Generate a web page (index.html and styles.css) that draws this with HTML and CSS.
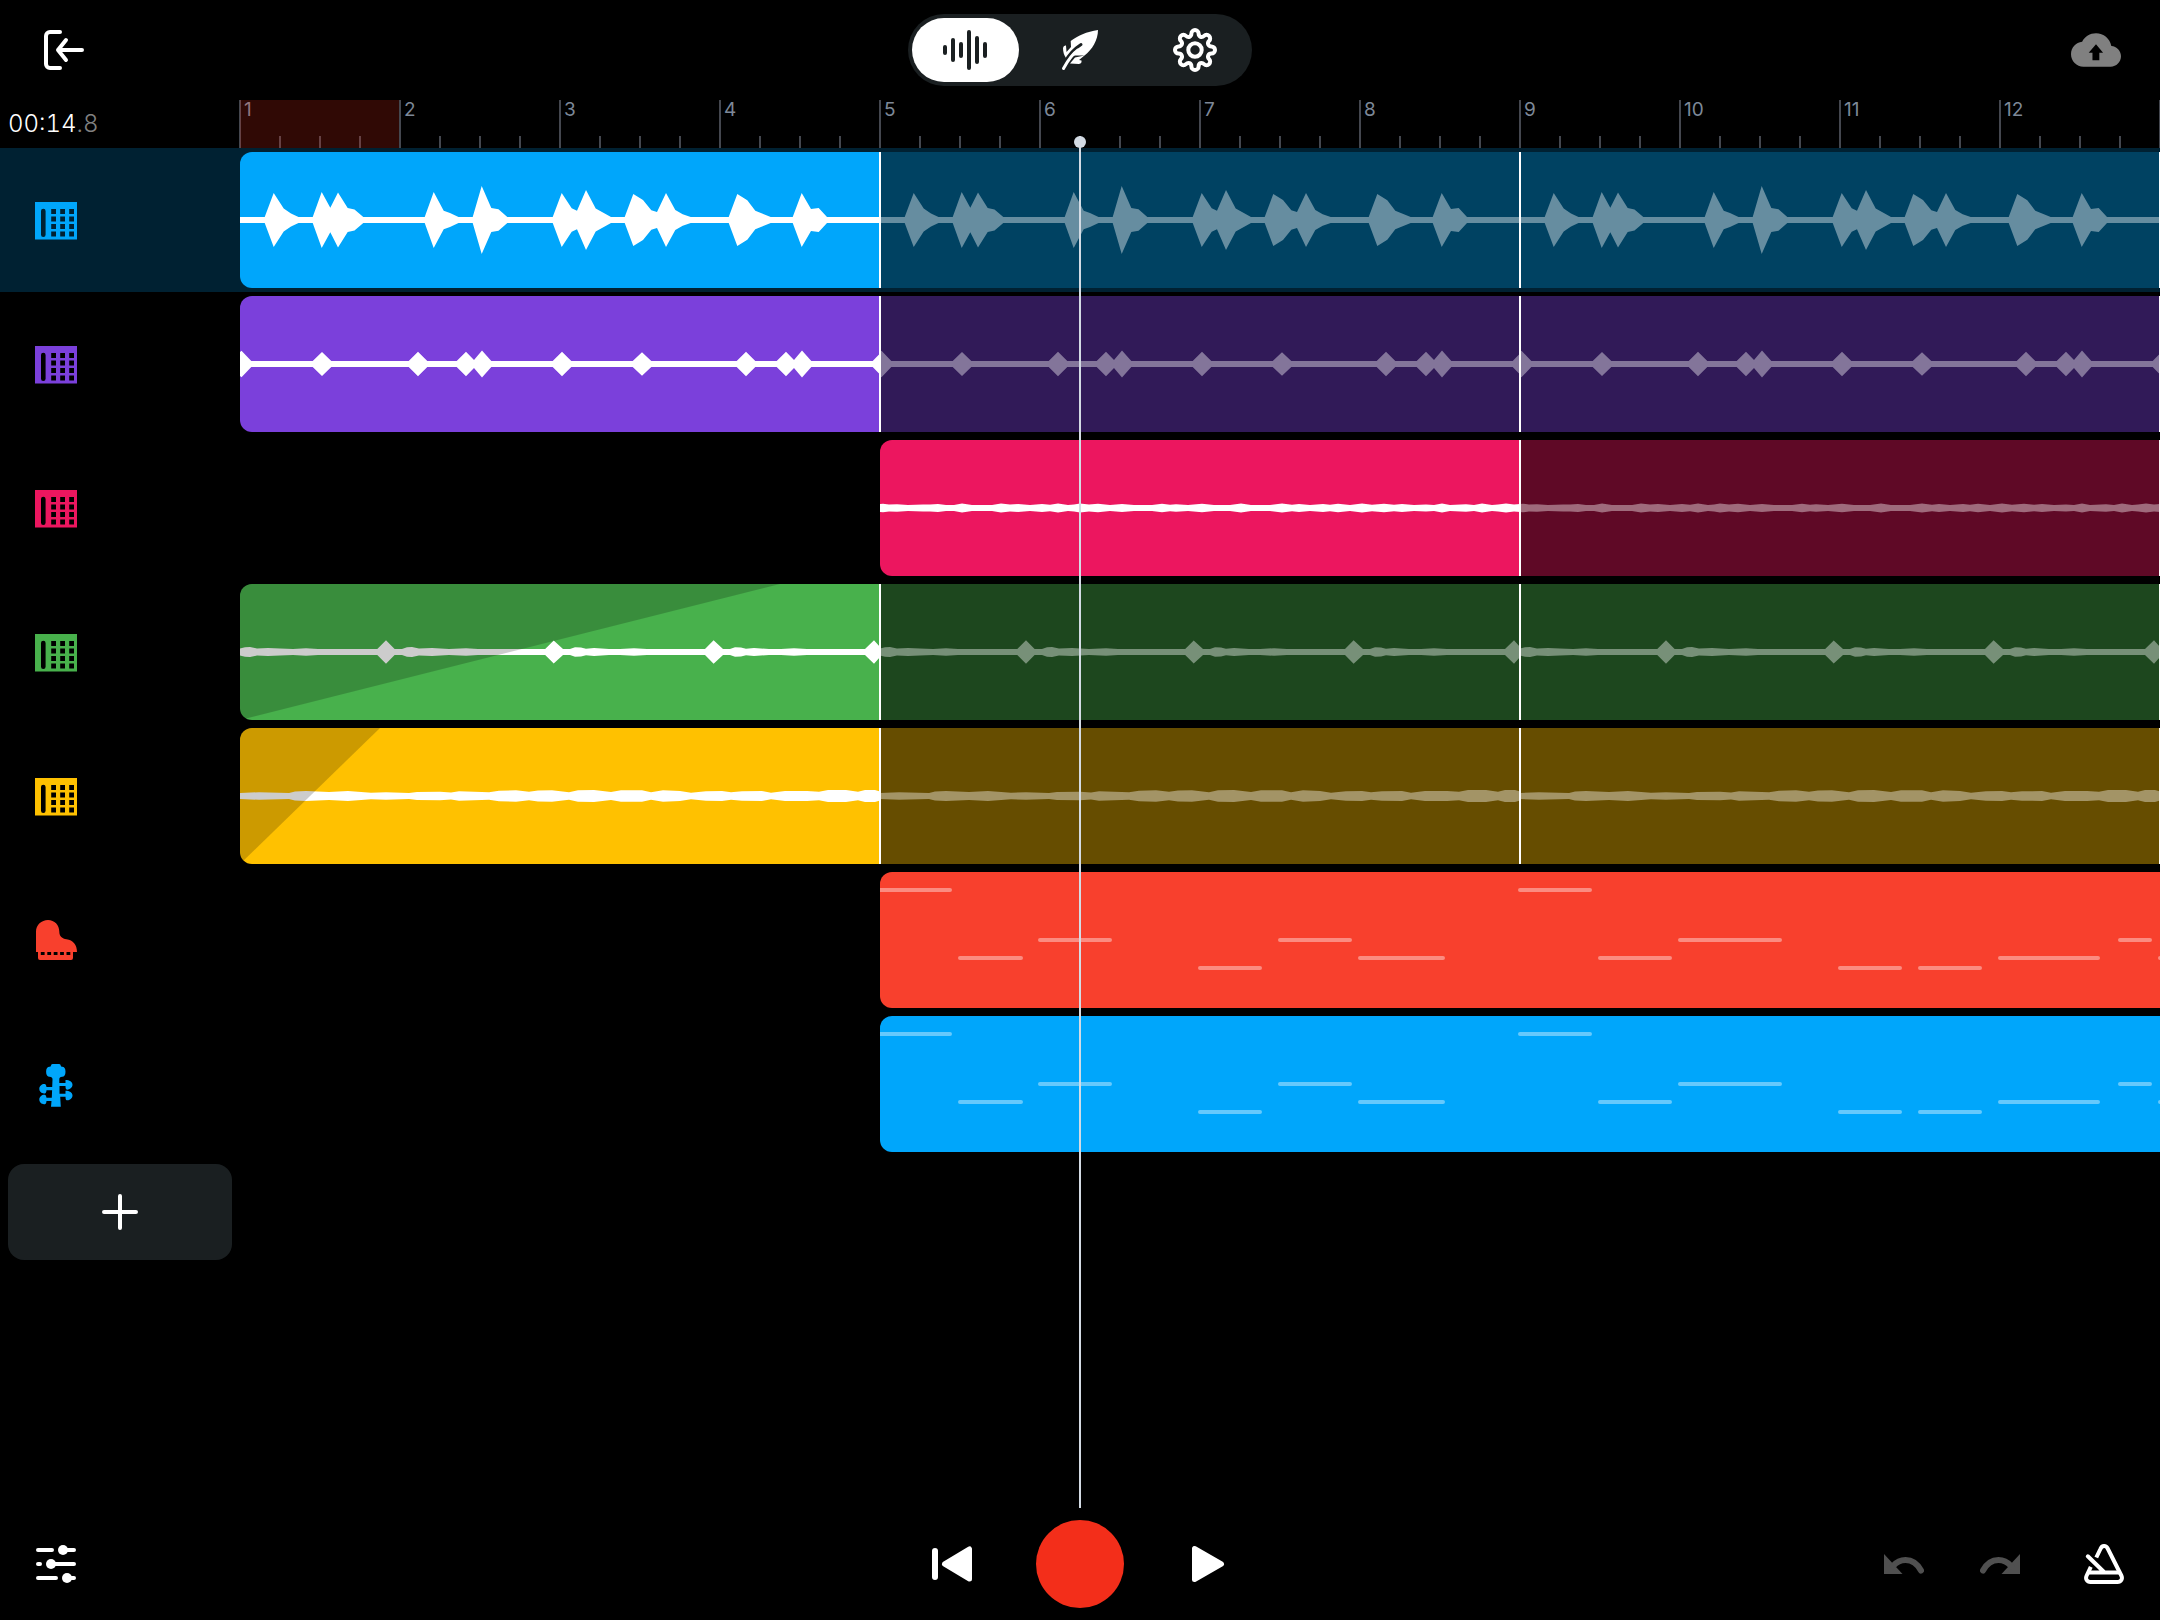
FILE: index.html
```html
<!DOCTYPE html>
<html lang="en">
<head>
<meta charset="utf-8">
<meta name="viewport" content="width=device-width, initial-scale=1">
<title>Studio</title>
<link rel="stylesheet" href="styles.css">
</head>
<body>
<svg class="defs" aria-hidden="true">
  <symbol id="icon-sampler" viewBox="0 0 48 48">
    <path fill="currentColor" fill-rule="evenodd" d="M3 6h42v37.6H3zM9 15a2.3 2.3 0 0 1 4.6 0v23.800a2.300 2.300 0 0 1-4.600 0zM19.200 13H24v5h-4.800zM28.200 13H33v5h-4.800zM37.200 13H42v5h-4.800zM19.200 20.500H24v5h-4.800zM28.200 20.500H33v5h-4.800zM37.200 20.500H42v5h-4.800zM19.200 28H24v5h-4.800zM28.200 28H33v5h-4.800zM37.200 28H42v5h-4.800zM19.200 35.500H24v5h-4.800zM28.200 35.500H33v5h-4.800zM37.200 35.500H42v5h-4.800z"/>
  </symbol>
  <symbol id="icon-piano" viewBox="0 0 48 48">
    <path fill="currentColor" fill-rule="evenodd" d="M4 36V15.500C4 9 9.500 4 16 4s11.300 5 11.300 11.500c0 5 3 7.200 7.200 7.700C41 24 45 28.500 45 36h-4v6a2 2 0 0 1-2 2H8a2 2 0 0 1-2-2v-6zM8.800 36h3.800v3H8.800zM15.300 36h3.800v3h-3.800zM21.700 36h3.800v3h-3.800zM28.100 36h3.800v3h-3.800zM34.500 36h3.800v3h-3.800z"/>
  </symbol>
  <symbol id="icon-strings" viewBox="0 0 48 48">
    <path fill="currentColor" d="M19 5.500Q19 4 20.500 4h6.700q1.500 0 1.500 1.500 0 1.200 1.500 1.200c2 0 3.300 1.800 3.300 5s-1.300 5-3.300 5c-2 0-2.900 1-2.900 2.800V23h6.200v-3c4 0 7 2 7 4.800s-3 4.900-5 4.900c-1.500 0-2-.7-2-3.700h-6v7.700h6v-3c4 0 7 2 7 4.800s-3 4.800-5 4.800c-1.500 0-2-.6-2-3.600h-5.300l.6 10H19l.5-5.800H14.500c-.3 3-1 3.300-2.500 3.300-2.500 0-4.700-2-4.700-4.700S10 34.700 12 34.700c1.500 0 2 .3 2.500 3h5.300l.3-7.500h-5.600c-.3 3-1 3.300-2.500 3.300-2.500 0-4.700-2-4.700-4.700S10 24 12 24c1.500 0 2 .3 2.500 3h5.700l.3-7.500c0-1.800-1-2.800-3-2.800-2 0-3.400-1.800-3.400-5s1.400-5 3.400-5Q19 6.700 19 5.500z"/>
  </symbol>
  <symbol id="icon-undo" viewBox="0 0 40 40">
    <path fill="currentColor" d="M0 10V30H18.500z"/>
    <path fill="none" stroke="currentColor" stroke-width="6" stroke-linecap="round" d="M9 22C13 17.500 17 16 21.500 16 28 16 33.500 20 37 26.500"/>
  </symbol>

  <symbol id="wave-1" viewBox="0 -68 640 136">
    <path id="half-1" d="M0 0V3H24.700L33.700 27 43.700 11.500 51 6.500 58.500 3H72.700L81.700 28 90.300 12.300 98 27.500 107.700 12 114.500 10.500 123.300 3H184.700L193.700 28 203.700 9.300 210 7 218.500 3H232.700L241.700 34 251.300 12 258.500 10.700 267.300 3H312.700L321.700 27 331.700 11.700 337 9.300 346 30 355.700 11.500 371 3H384.700L393.300 26 403 20 411.300 9.700 417 8 426 27 435.300 10 442.700 5.700 450.700 3H488.700L497.300 26 507.300 19.700 515.300 9.300 530.700 3H552.700L561.700 27 571 11 578.700 12 587 3H640V0z"/>
    <use href="#half-1" transform="scale(1 -1)"/>
  </symbol>
  <symbol id="wave-2" viewBox="0 -68 640 136">
    <path id="half-2" d="M0 0V12L1.500 13.300 11.300 3H72.700L82 12 91.300 3H168.700L178 12.300 187.300 3H216.700L226 12.300 234 4 242 13.500 251.300 3H312.700L322 12.300 331.300 3H392.700L402 11.700 411.300 3H496.700L506 12.300 515.300 3H536.700L546 12.300 554 4 562 13.500 571.300 3H632.700L640 10.500V0z"/>
    <use href="#half-2" transform="scale(1 -1)"/>
  </symbol>
  <symbol id="wave-3" viewBox="0 -68 640 136">
    <path id="half-3" d="M0 0V4L3 4.300 9 3.500 17 3.700 28 3 43 3.500 50 3.500 58 4 66 3 74 3 82 4.500 92 3 112 3 121 4.400 130 3.500 138 3.900 150 3 162 3.900 170 3.300 178 4.500 188 3 194 3.500 200 4.400 209 3.600 218 4.200 230 3 242 4 254 3H272L282 4.200 290 3.300 296 3.700 308 3 322 4.300 334 3 350 3 361 4.600 371 3 390 3 402 4.600 412 3.300 419 3.900 430 3 443 3.900 450 3.300 458 4.200 470 3 482 4.600 492 3.300 504 4.200 514 3.300 522 4 534 3 546 3.600 554 3 562 4.600 570 3 586 3.700 594 3 602 4.500 612 3 618 3.500 626 4.500 634 3.500 640 4V0z"/>
    <use href="#half-3" transform="scale(1 -1)"/>
  </symbol>
  <symbol id="wave-4" viewBox="0 -68 640 136">
    <path id="half-4" d="M0 0V3.500L5 4.700 10 5 17 3.600 28 4 40 3.600 53 3 66 3.800 78 3H137.300L146 11.700 154.600 3H162L167 4.700 172 4.900 179 3.500 192 4 209 3 226 3.800 238 3H305.200L313.700 11.500 323 3H330L335 4.800 341 4.600 346 3.200 354 4 369 3H380L394 3.800 407 3H465L473.600 11.700 483 3H490L495 4.800 501 4.600 506 3.200 514 4 529 3H541L554 3.800 567 3H625L634 11.700 640 5V0z"/>
    <use href="#half-4" transform="scale(1 -1)"/>
  </symbol>
  <symbol id="wave-5" viewBox="0 -68 640 136">
    <path id="half-5" d="M0 0V3L19 3.800 49 3 55 4.600 66 5 89 4 108 5 131 3.300 146 3.800 169 3 177 4 200 4.200 211 3.500 219 4.700 249 3.700 259 5.300 276 5.800 289 4.200 298 5.600 312 5.700 329 3.800 338 5.700 354 6.100 371 4 381 5.800 402 5.800 411 3.800 423 5.700 440 5 451 3.300 466 4.700 482 5 491 3.700 502 4.700 522 4.900 531 3.300 545 5 567 5 579 4.200 588 6 606 6.100 618 4.200 625 6 635 6 640 4.500V0z"/>
    <use href="#half-5" transform="scale(1 -1)"/>
  </symbol>
  <symbol id="notes" viewBox="0 0 1280 136">
    <g fill="none" stroke="#fff" stroke-opacity=".4" stroke-width="4" stroke-linecap="round">
      <path d="M0 18H70M640 18H710"/>
      <path d="M160 68H230M400 68H470M800 68H900M1240 68H1270"/>
      <path d="M80 86H141M480 86H563M720 86H790M1120 86H1218M1280 86H1300"/>
      <path d="M320 96H380M960 96H1020M1040 96H1100"/>
    </g>
  </symbol>
</svg>

<div class="app">
  <header class="topbar">
    <button class="icon-button" aria-label="Exit">
      <svg width="40" height="40" viewBox="0 0 40 40" class="line"><path d="M16 2H6a4 4 0 0 0-4 4v28a4 4 0 0 0 4 4h10M38 20H14M22 10l-8 10 8 10"/></svg>
    </button>
    <nav class="modes" aria-label="Mode">
      <button class="mode mode-active" aria-label="Tracks" aria-pressed="true">
        <svg width="48" height="48" viewBox="-24 -24 48 48" class="line"><path d="M-20-3V3M-12-10V10M-4-6V6M4-18V18M12-12V12M20-6V6"/></svg>
      </button>
      <button class="mode" aria-label="Lyrics">
        <svg width="48" height="48" viewBox="-24 -24 48 48">
          <path fill="#fff" d="M18-20C7-18.500-3-14-9.300-9L-9-3-13.500 2-14-4.500Q-16.500-5-17-2C-17 2-16 5-14 8L-5 5.500H4.500C12 0 18-10 18-20zM-5 7.500L-10 13.500-1 14Q2 13.500 1.500 10.500L-1 10 4.500 5.500z"/>
          <path class="feather-gap" d="M1-5.500C-6-1-12 6-15 12"/>
          <path class="feather-stem" d="M-2 0C-9 5-13 12-16.500 18.500"/>
        </svg>
      </button>
      <button class="mode" aria-label="Settings">
        <svg width="48" height="48" viewBox="-24 -24 48 48" class="line"><circle r="6.700"/><path d="M-3.600-16.400A3.600 3.600 0 0 1 3.600-16.400C3.600-13.200 6.790-11.880 9.050-14.140A3.600 3.600 0 0 1 14.140-9.050C11.880-6.790 13.200-3.600 16.400-3.600A3.600 3.600 0 0 1 16.400 3.600C13.200 3.600 11.880 6.790 14.140 9.050A3.600 3.600 0 0 1 9.050 14.140C6.790 11.880 3.600 13.200 3.600 16.400A3.600 3.600 0 0 1-3.600 16.400C-3.600 13.200-6.790 11.880-9.050 14.140A3.600 3.600 0 0 1-14.140 9.050C-11.880 6.790-13.200 3.600-16.400 3.600A3.600 3.600 0 0 1-16.400-3.600C-13.200-3.600-11.880-6.790-14.140-9.050A3.600 3.600 0 0 1-9.050-14.140C-6.790-11.880-3.600-13.200-3.600-16.400z"/></svg>
      </button>
    </nav>
    <button class="icon-button icon-button-end" aria-label="Save to cloud">
      <svg width="50" height="50" viewBox="0 0 24 24"><path fill="#808080" fill-rule="evenodd" d="M19.350 10.040C18.670 6.590 15.640 4 12 4 9.110 4 6.600 5.640 5.350 8.040 2.340 8.360 0 10.910 0 14c0 3.310 2.690 6 6 6h13c2.760 0 5-2.240 5-5 0-2.640-2.050-4.780-4.650-4.960zM13.600 13.300v3.600h-3.300v-3.600H8.500L12 9.200l3.400 4.100z"/></svg>
    </button>
  </header>

  <main class="timeline">
    <div class="ruler-row">
      <p class="clock">00:14<span class="clock-tenths">.8</span></p>
      <ol class="ruler">
        <li class="bar bar-current">1</li><li class="bar">2</li><li class="bar">3</li><li class="bar">4</li><li class="bar">5</li><li class="bar">6</li><li class="bar">7</li><li class="bar">8</li><li class="bar">9</li><li class="bar">10</li><li class="bar">11</li><li class="bar">12</li><li class="bar"></li>
      </ol>
    </div>

    <section class="track track-blue track-selected">
      <button class="track-head" aria-label="Track 1, sampler"><svg class="track-icon"><use href="#icon-sampler"/></svg></button>
      <div class="lane">
        <div class="clip clip-first"><svg class="wave"><use href="#wave-1"/></svg></div>
        <div class="clip clip-loop"><svg class="wave"><use href="#wave-1"/></svg></div>
        <div class="clip clip-loop"><svg class="wave"><use href="#wave-1"/></svg></div>
      </div>
    </section>
    <section class="track track-purple">
      <button class="track-head" aria-label="Track 2, sampler"><svg class="track-icon"><use href="#icon-sampler"/></svg></button>
      <div class="lane">
        <div class="clip clip-first"><svg class="wave"><use href="#wave-2"/></svg></div>
        <div class="clip clip-loop"><svg class="wave"><use href="#wave-2"/></svg></div>
        <div class="clip clip-loop"><svg class="wave"><use href="#wave-2"/></svg></div>
      </div>
    </section>
    <section class="track track-pink">
      <button class="track-head" aria-label="Track 3, sampler"><svg class="track-icon"><use href="#icon-sampler"/></svg></button>
      <div class="lane lane-from-5">
        <div class="clip clip-first"><svg class="wave"><use href="#wave-3"/></svg></div>
        <div class="clip clip-loop"><svg class="wave"><use href="#wave-3"/></svg></div>
      </div>
    </section>
    <section class="track track-green">
      <button class="track-head" aria-label="Track 4, sampler"><svg class="track-icon"><use href="#icon-sampler"/></svg></button>
      <div class="lane">
        <div class="clip clip-first"><svg class="wave"><use href="#wave-4"/><path class="fade" d="M0 0H540L0 136z"/></svg></div>
        <div class="clip clip-loop"><svg class="wave"><use href="#wave-4"/></svg></div>
        <div class="clip clip-loop"><svg class="wave"><use href="#wave-4"/></svg></div>
      </div>
    </section>
    <section class="track track-yellow">
      <button class="track-head" aria-label="Track 5, sampler"><svg class="track-icon"><use href="#icon-sampler"/></svg></button>
      <div class="lane">
        <div class="clip clip-first"><svg class="wave"><use href="#wave-5"/><path class="fade" d="M0 0H140L0 136z"/></svg></div>
        <div class="clip clip-loop"><svg class="wave"><use href="#wave-5"/></svg></div>
        <div class="clip clip-loop"><svg class="wave"><use href="#wave-5"/></svg></div>
      </div>
    </section>
    <section class="track track-red">
      <button class="track-head" aria-label="Track 6, piano"><svg class="track-icon"><use href="#icon-piano"/></svg></button>
      <div class="lane lane-from-5">
        <div class="clip-midi"><svg class="notes"><use href="#notes"/></svg></div>
      </div>
    </section>
    <section class="track track-blue">
      <button class="track-head" aria-label="Track 7, strings"><svg class="track-icon"><use href="#icon-strings"/></svg></button>
      <div class="lane lane-from-5">
        <div class="clip-midi"><svg class="notes"><use href="#notes"/></svg></div>
      </div>
    </section>

    <button class="add-track" aria-label="Add track">
      <svg width="40" height="40" viewBox="0 0 40 40" class="line"><path d="M20 4v32M4 20h32"/></svg>
    </button>
    <div class="playhead"></div>
  </main>

  <footer class="transport">
    <button class="icon-button" aria-label="Mixer">
      <svg width="40" height="40" viewBox="0 0 40 40" class="line"><path d="M2 6H16M27 6H38M2 20H4M15 20H38M2 34H20M31 34H38"/><g fill="#fff" stroke="none"><circle cx="27" cy="6" r="5"/><circle cx="15" cy="20" r="5"/><circle cx="31" cy="34" r="5"/></g></svg>
    </button>
    <div class="transport-main">
      <button class="icon-button" aria-label="Back to start">
        <svg width="40" height="40" viewBox="0 0 40 40" class="solid"><rect x="0" y="4" width="6" height="32" rx="3" stroke="none"/><path d="M12.500 20L37.500 5V35z"/></svg>
      </button>
      <button class="record" aria-label="Record"></button>
      <button class="icon-button" aria-label="Play">
        <svg width="40" height="40" viewBox="0 0 40 40" class="solid"><path d="M33.500 20L6.500 4.500V35.500z"/></svg>
      </button>
    </div>
    <div class="transport-end">
      <div class="history">
        <button class="icon-button" aria-label="Undo" disabled>
          <svg width="40" height="40" viewBox="0 0 40 40"><use href="#icon-undo"/></svg>
        </button>
        <button class="icon-button" aria-label="Redo" disabled>
          <svg width="40" height="40" viewBox="0 0 40 40"><use href="#icon-undo" transform="translate(40 0) scale(-1 1)"/></svg>
        </button>
      </div>
      <button class="icon-button" aria-label="Metronome">
        <svg width="40" height="40" viewBox="0 0 40 40" class="line"><path stroke-linecap="butt" d="M12.300 13.500L16.400 5C18 1.200 22 1.200 23.700 4.500L37.300 31.500C39 35 37 38 33.500 38H6.500C3 38 1 35 2.700 31.500L6.800 22.800"/><path d="M5 28.500H35M3.800 12.300L20 28"/></svg>
      </button>
    </div>
  </footer>
</div>
</body>
</html>
```
FILE: styles.css
```css
:root {
  --bar: 160px;
  --head: 240px;
}

* {
  box-sizing: border-box;
}

body {
  margin: 0;
  background: #000;
  color: #fff;
  font-family: Inter, "Liberation Sans", sans-serif;
}

button {
  display: flex;
  align-items: center;
  justify-content: center;
  margin: 0;
  padding: 0;
  border: 0;
  background: none;
  color: inherit;
  font: inherit;
}

svg {
  display: block;
}

.defs {
  position: absolute;
  width: 0;
  height: 0;
}

.line {
  fill: none;
  stroke: currentColor;
  stroke-width: 4;
  stroke-linecap: round;
  stroke-linejoin: round;
}

.solid {
  fill: #fff;
  stroke: #fff;
  stroke-width: 5;
  stroke-linejoin: round;
}

.app {
  display: flex;
  flex-direction: column;
  min-height: 100vh;
  overflow-x: clip;
}

/* Top bar */

.topbar {
  display: grid;
  grid-template-columns: 1fr auto 1fr;
  align-items: center;
  height: 100px;
  padding: 0 39px 0 44px;
}

.icon-button-end {
  justify-self: end;
}

.topbar .icon-button:first-child {
  justify-self: start;
}

.modes {
  display: grid;
  grid-template-columns: repeat(3, 1fr);
  gap: 8px;
  width: 344px;
  height: 72px;
  margin-right: 5px;
  padding: 4px;
  border-radius: 36px;
  background: #1a1f21;
}

.mode {
  border-radius: 32px;
}

.mode-active {
  background: #fff;
  color: #1a1f21;
}

.feather-gap {
  fill: none;
  stroke: #1a1f21;
  stroke-width: 3;
  stroke-linecap: round;
}

.feather-stem {
  fill: none;
  stroke: #fff;
  stroke-width: 3;
  stroke-linecap: round;
}

/* Timeline */

.timeline {
  position: relative;
  flex: 1;
}

.ruler-row {
  display: grid;
  grid-template-columns: var(--head) 1fr;
  height: 48px;
}

.clock {
  margin: 0;
  padding: 8px;
  font-size: 24px;
  font-weight: 300;
  font-variant-numeric: tabular-nums;
  line-height: 32px;
}

.clock-tenths {
  color: #808080;
}

.ruler {
  display: flex;
  min-width: 0;
  margin: 0 0 0 -1px;
  padding: 0;
  list-style: none;
}

.bar {
  position: relative;
  flex: none;
  width: var(--bar);
  padding-left: 3px;
  border-left: 2px solid #44474f;
  background: repeating-linear-gradient(to right, #44474f 0 2px, transparent 2px 40px) left bottom / 100% 12px no-repeat border-box;
  color: #7d8898;
  font-size: 19px;
  line-height: 20px;
}

.bar-current::after {
  content: "";
  position: absolute;
  inset: 0 -1px 0 -1px;
  background: rgba(242, 46, 26, .2);
}

.track {
  display: grid;
  grid-template-columns: var(--head) 1fr;
  height: 144px;
}

.track-selected {
  background: #002132;
}

.track-blue { --color: #00a6fb; --dim: #004262; }
.track-purple { --color: #7b40db; --dim: #311a58; }
.track-pink { --color: #ec165f; --dim: #5f0926; }
.track-green { --color: #48b14c; --dim: #1d471e; }
.track-yellow { --color: #ffc100; --dim: #664d00; }
.track-red { --color: #f8402d; }

.track-head {
  justify-content: flex-start;
  padding-left: 32px;
  color: var(--color);
}

.track-icon {
  width: 48px;
  height: 48px;
}

.lane {
  display: flex;
  min-width: 0;
  padding: 4px 0;
  overflow: hidden;
}

.lane-from-5 {
  padding-left: calc(4 * var(--bar));
}

.clip {
  position: relative;
  flex: none;
  width: calc(4 * var(--bar));
  background: var(--color);
}

/* Loop boundary, centred on the seam between two clips */
.clip::after {
  content: "";
  position: absolute;
  top: 0;
  right: -1px;
  bottom: 0;
  z-index: 1;
  width: 2px;
  background: #fff;
}

.clip-loop {
  background: var(--dim);
}

.clip-first,
.clip-first .wave {
  border-radius: 12px 0 0 12px;
}

.wave {
  width: 100%;
  height: 136px;
  fill: #fff;
}

.clip-loop .wave {
  fill: rgba(255, 255, 255, .4);
}

.fade {
  fill: rgba(0, 0, 0, .2);
}

.clip-midi {
  flex: 1;
  min-width: 0;
  overflow: hidden;
  border-radius: 12px 0 0 12px;
  background: var(--color);
}

.notes {
  width: calc(8 * var(--bar));
  height: 136px;
}

.add-track {
  width: calc(var(--head) - 16px);
  height: 96px;
  margin: 8px;
  border-radius: 16px;
  background: #1a1f21;
}

.playhead {
  position: absolute;
  top: 36px;
  bottom: 0;
  left: calc(var(--head) + 5.25 * var(--bar) - 1px);
  z-index: 2;
  width: 2px;
  background: #d3dbe4;
}

.playhead::before {
  content: "";
  position: absolute;
  top: 0;
  left: -5px;
  width: 12px;
  height: 12px;
  border-radius: 50%;
  background: #d3dbe4;
}

/* Transport */

.transport {
  display: grid;
  grid-template-columns: 1fr auto 1fr;
  align-items: center;
  height: 112px;
  padding: 0 36px;
}

.transport > .icon-button {
  justify-self: start;
}

.transport-main {
  display: flex;
  align-items: center;
  gap: 64px;
}

.record {
  width: 88px;
  height: 88px;
  border-radius: 50%;
  background: #f32e1a;
}

.transport-end {
  display: flex;
  justify-self: end;
  gap: 64px;
}

.history {
  display: flex;
  gap: 56px;
  color: #505050;
}
```
